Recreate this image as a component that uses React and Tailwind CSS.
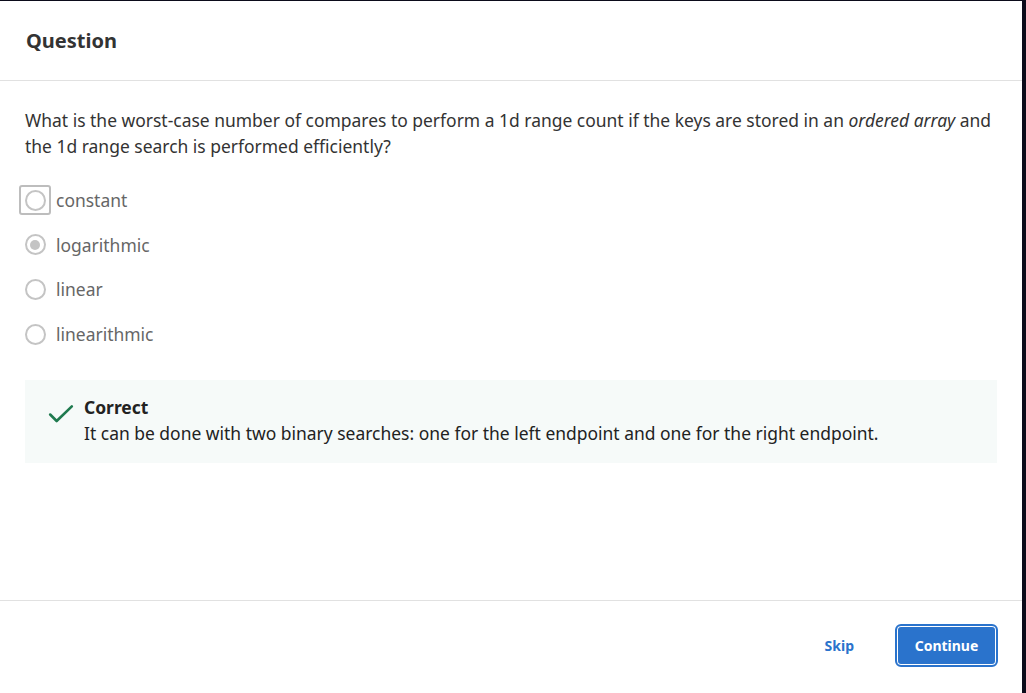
import { useState } from "react";

const options = ["constant", "logarithmic", "linear", "linearithmic"];

export default function App() {
  const [selected, setSelected] = useState(1);

  return (
    <div className="h-[693px] w-[1026px] bg-[#0b0b1a] pt-px overflow-hidden" style={{ fontFamily: '"Noto Sans", "Open Sans", sans-serif' }}>
      <div className="flex h-[692px] w-[1022px] flex-col bg-white">
        {/* Header */}
        <div className="flex h-[80px] shrink-0 items-center border-b border-[#e1e1e1] px-[26px]">
          <h1 className="text-[20px] font-bold text-[#333]">Question</h1>
        </div>

        {/* Body */}
        <div className="flex-1 px-[25px] pt-[26px]">
          <p className="text-[17.47px] leading-[26px] text-[#333]">
            What is the worst-case number of compares to perform a 1d range count if the keys are stored in an{" "}
            <em>ordered array</em> and the 1d range search is performed efficiently?
          </p>

          <div className="mt-[26px] flex flex-col gap-[14.7px]">
            {options.map((opt, i) => (
              <label key={opt} className="flex h-[30px] cursor-pointer items-center" onClick={() => setSelected(i)}>
                <span
                  className={
                    "-ml-[6px] flex h-[30px] w-[32px] items-center justify-center rounded-[3px] border-2 " +
                    (i === 0 ? "border-[#bdbdbd]" : "border-transparent")
                  }
                >
                  <span className="flex h-[21px] w-[21px] items-center justify-center rounded-full border-2 border-[#c4c4c4] bg-white">
                    {selected === i && <span className="h-[10px] w-[10px] rounded-full bg-[#c4c4c4]" />}
                  </span>
                </span>
                <span className="ml-[5px] text-[17.47px] text-[#666]">{opt}</span>
              </label>
            ))}
          </div>

          <div className="mt-[31px] flex h-[83px] w-[972px] items-start bg-[#f6faf9] pl-[23px] pt-[14px]">
            <svg width="26" height="26" viewBox="0 0 24 24" fill="none" stroke="#1f7a4f" strokeWidth="2.4" strokeLinecap="round" strokeLinejoin="round" className="mt-[7px] shrink-0">
              <path d="M2 12.5l6 6L22 5" />
            </svg>
            <div className="ml-[10px] text-[17.47px] leading-[26px] text-[#222]">
              <div className="font-bold">Correct</div>
              <div>It can be done with two binary searches: one for the left endpoint and one for the right endpoint.</div>
            </div>
          </div>
        </div>

        {/* Footer */}
        <div className="flex h-[93px] shrink-0 items-center justify-end gap-[43px] border-t border-[#e1e1e1] pb-[4px] pr-[26px]">
          <button className="text-[14px] font-bold text-[#2a73cc]">Skip</button>
          <button className="h-[39px] w-[99px] rounded-[4px] bg-[#2a73cc] text-[14px] font-bold text-white outline outline-2 outline-[#2a73cc] shadow-[inset_0_0_0_1px_#fff]">
            Continue
          </button>
        </div>
      </div>
    </div>
  );
}
